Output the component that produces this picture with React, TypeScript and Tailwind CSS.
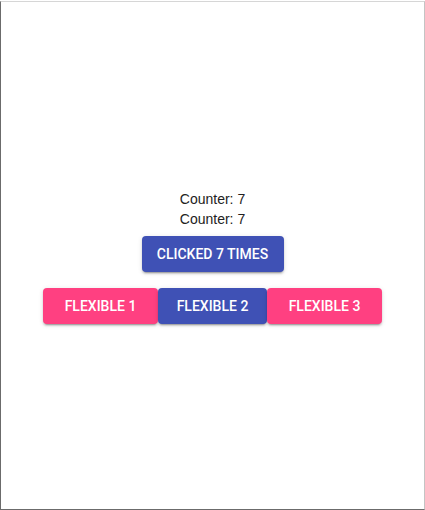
import React, { useState } from 'react';

const shadow =
  'shadow-[0px_3px_1px_-2px_rgba(0,0,0,0.2),0px_2px_2px_0px_rgba(0,0,0,0.14),0px_1px_5px_0px_rgba(0,0,0,0.12)]';

const btn = `h-[36px] rounded text-white uppercase text-[14px] font-medium tracking-normal font-['Roboto',sans-serif] ${shadow}`;

export default function App() {
  const [count, setCount] = useState(7);

  return (
    <div className="h-[510px] w-[425px] bg-white pt-px">
      <div className="h-full w-full border-l border-b border-l-[#6b6b6b] border-b-[#6b6b6b] border-t border-r border-t-[#d6d6d6] border-r-[#c4c4c4] flex flex-col items-center pt-[187px]">
        <p className="text-[14px] leading-[20px] text-[#222] font-['Liberation_Sans',Arial,sans-serif]">
          Counter: {count}
        </p>
        <p className="text-[14px] leading-[20px] text-[#222] font-['Liberation_Sans',Arial,sans-serif]">
          Counter: {count}
        </p>

        <button onClick={() => setCount(count + 1)} className={`mt-[7px] w-[142px] bg-[#3f51b5] ${btn}`}>
          Clicked {count} times
        </button>

        <div className="mt-[16px] flex">
          <button className={`w-[115px] bg-[#ff4081] ${btn}`}>Flexible 1</button>
          <button className={`w-[109px] bg-[#3f51b5] ${btn}`}>Flexible 2</button>
          <button className={`w-[115px] bg-[#ff4081] ${btn}`}>Flexible 3</button>
        </div>
      </div>
    </div>
  );
}
